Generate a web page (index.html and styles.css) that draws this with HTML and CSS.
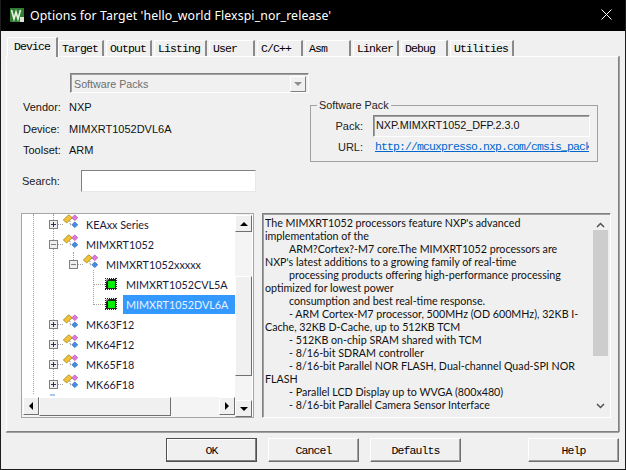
FILE: index.html
```html
<!DOCTYPE html>
<html lang="en">
<head>
<meta charset="utf-8">
<title>Options for Target</title>
<link rel="stylesheet" href="styles.css">
</head>
<body>
<svg class="defs" width="0" height="0" aria-hidden="true">
  <symbol id="gem" viewBox="0 0 16 15">
    <path d="M.3 6 6 .300 10 3.500 4 9z" fill="#f2c230" stroke="#8a7420" stroke-width=".7"/>
    <path d="M9.500 3.500 12.500.500 15.700 3.500 12.500 6.500z" fill="#e878e0" stroke="#a040a0" stroke-width=".7"/>
    <path d="M9.500 11 12.500 8 15.700 11 12.500 14z" fill="#3f8fe8" stroke="#2a5a9a" stroke-width=".7"/>
    <path d="M7.500 7v4h2" fill="none" stroke="#808080" stroke-width="1" stroke-dasharray="1 1"/>
  </symbol>
  <symbol id="chip" viewBox="0 0 12 12">
    <rect width="12" height="12" fill="#fff"/>
    <path d="M0 .500h12M0 11.500h12M.500 0v12M11.500 0v12" stroke="#222" stroke-width="1" stroke-dasharray="1 1"/>
    <rect x="1" y="1" width="10" height="10" fill="#222"/>
    <path d="M1 1h3L1 4z" fill="#999"/>
    <rect x="3" y="3" width="7" height="7" fill="#00f000"/>
  </symbol>
</svg>
<div class="window">
  <header class="titlebar">
    <svg class="app-icon" viewBox="0 0 14 14" width="14" height="14">
      <rect width="14" height="14" fill="#2f7d32"/>
      <path d="M1.500 2l2.500 9 2-7 2 7 2.500-9" fill="none" stroke="#e8f4e0" stroke-width="1.600"/>
      <rect x="10" y="9" width="4" height="5" fill="#d8e8d0"/>
    </svg>
    <span class="title">Options for Target 'hello_world Flexspi_nor_release'</span>
    <svg class="close" viewBox="0 0 11 11" width="11" height="11"><path d="M.5.500l10 10M10.500.500l-10 10" stroke="#fff" stroke-width="1" fill="none"/></svg>
  </header>
  <main class="client">
    <nav class="tabs">
      <span class="tab active w-device">Device</span>
      <span class="tab w-target">Target</span>
      <span class="tab w-output">Output</span>
      <span class="tab w-listing">Listing</span>
      <span class="tab w-user">User</span>
      <span class="tab w-cpp">C/C++</span>
      <span class="tab w-asm">Asm</span>
      <span class="tab w-linker">Linker</span>
      <span class="tab w-debug">Debug</span>
      <span class="tab w-util">Utilities</span>
    </nav>
    <section class="panel">
      <div class="combo">
        <span class="combo-text">Software Packs</span>
        <span class="combo-btn"><i class="tri-down"></i></span>
      </div>
      <div class="info">
        <dl class="facts">
          <dt>Vendor:</dt><dd>NXP</dd>
          <dt>Device:</dt><dd>MIMXRT1052DVL6A</dd>
          <dt>Toolset:</dt><dd>ARM</dd>
        </dl>
        <fieldset class="pack">
          <legend>Software Pack</legend>
          <div class="pack-row">
            <label>Pack:</label>
            <div class="pack-field">NXP.MIMXRT1052_DFP.2.3.0</div>
          </div>
          <div class="pack-row url-row">
            <label>URL:</label>
            <a class="link">http://mcuxpresso.nxp.com/cmsis_pack</a>
          </div>
        </fieldset>
      </div>
      <div class="search">
        <label>Search:</label>
        <div class="search-box"></div>
      </div>
      <div class="lower">
        <div class="tree">
          <div class="tree-view">
            <i class="guide g0"></i><i class="guide g1"></i><i class="guide g2"></i><i class="guide g3"></i>
            <div class="node l1"><i class="exp plus"></i><i class="dash"></i><svg class="gem"><use href="#gem"/></svg><span>KEAxx Series</span></div>
            <div class="node l1"><i class="exp"></i><i class="dash"></i><svg class="gem"><use href="#gem"/></svg><span>MIMXRT1052</span></div>
            <div class="node l2"><i class="exp"></i><i class="dash"></i><svg class="gem"><use href="#gem"/></svg><span>MIMXRT1052xxxxx</span></div>
            <div class="node l3"><i class="dash long"></i><svg class="chip"><use href="#chip"/></svg><span>MIMXRT1052CVL5A</span></div>
            <div class="node l3"><i class="dash long"></i><svg class="chip"><use href="#chip"/></svg><span class="sel">MIMXRT1052DVL6A</span></div>
            <div class="node l1"><i class="exp plus"></i><i class="dash"></i><svg class="gem"><use href="#gem"/></svg><span>MK63F12</span></div>
            <div class="node l1"><i class="exp plus"></i><i class="dash"></i><svg class="gem"><use href="#gem"/></svg><span>MK64F12</span></div>
            <div class="node l1"><i class="exp plus"></i><i class="dash"></i><svg class="gem"><use href="#gem"/></svg><span>MK65F18</span></div>
            <div class="node l1"><i class="exp plus"></i><i class="dash"></i><svg class="gem"><use href="#gem"/></svg><span>MK66F18</span></div>
            <div class="stub"></div>
          </div>
          <div class="hbar">
            <span class="sb-btn"><i class="tri-left"></i></span>
            <span class="sb-thumb h-thumb"></span>
            <span class="sb-track"></span>
            <span class="sb-btn"><i class="tri-right"></i></span>
          </div>
          <div class="vbar">
            <span class="sb-btn"><i class="tri-up"></i></span>
            <span class="sb-track sb-a"></span>
            <span class="sb-thumb v-thumb"></span>
            <span class="sb-track"></span>
            <span class="sb-btn"><i class="tri-down dark"></i></span>
          </div>
        </div>
        <div class="desc">
          <div class="desc-text">
            <div>The MIMXRT1052 processors feature NXP's advanced</div>
            <div>implementation of the</div>
            <div class="ind">ARM?Cortex?-M7 core.The MIMXRT1052 processors are</div>
            <div>NXP's latest additions to a growing family of real-time</div>
            <div class="ind">processing products offering high-performance processing</div>
            <div>optimized for lowest power</div>
            <div class="ind">consumption and best real-time response.</div>
            <div class="ind">- ARM Cortex-M7 processor, 500MHz (OD 600MHz), 32KB I-</div>
            <div>Cache, 32KB D-Cache, up to 512KB TCM</div>
            <div class="ind">- 512KB on-chip SRAM shared with TCM</div>
            <div class="ind">- 8/16-bit SDRAM controller</div>
            <div class="ind">- 8/16-bit Parallel NOR FLASH, Dual-channel Quad-SPI NOR</div>
            <div>FLASH</div>
            <div class="ind">- Parallel LCD Display up to WVGA (800x480)</div>
            <div class="ind">- 8/16-bit Parallel Camera Sensor Interface</div>
          </div>
          <div class="desc-bar">
            <svg class="chev" viewBox="0 0 9 6" width="9" height="6"><path d="M1 5l3.500-3.500L8 5" fill="none" stroke="#505050" stroke-width="1.500"/></svg>
            <span class="desc-thumb"></span>
            <svg class="chev" viewBox="0 0 9 6" width="9" height="6"><path d="M1 1l3.500 3.500L8 1" fill="none" stroke="#505050" stroke-width="1.500"/></svg>
          </div>
        </div>
      </div>
    </section>
    <footer class="buttons">
      <button class="btn default">OK</button>
      <button class="btn">Cancel</button>
      <button class="btn">Defaults</button>
      <button class="btn help">Help</button>
    </footer>
  </main>
</div>
</body>
</html>
```
FILE: styles.css
```css
* { box-sizing: border-box; }
html, body { margin: 0; padding: 0; }
body { width: 626px; height: 470px; overflow: hidden; font: 11px "Liberation Sans", sans-serif; color: #000; background: #f0f0f0; }
.defs { display: block; height: 0; }
.window { width: 626px; height: 470px; display: flex; flex-direction: column; border: 1px solid #1c1c1c; border-top: 0; }
.titlebar { flex: 0 0 31px; background: #000; color: #fff; display: flex; align-items: center; padding: 0 13px 0 9px; }
.app-icon { flex: none; margin-top: -1px; }
.title { flex: 1; margin-left: 6px; font: 12.300px "Noto Sans", sans-serif; letter-spacing: .1px; white-space: nowrap; margin-top: -1px; }
.close { flex: none; margin-top: -3px; }
.client { flex: 1; display: flex; flex-direction: column; background: #f0f0f0; padding: 6px 6px 0 5px; }

.tabs { display: flex; height: 19px; padding-left: 2px; align-items: flex-end; position: relative; z-index: 1; }
.tab { height: 16px; margin-right: 2px; font: 11.500px/15px "Liberation Mono", monospace; letter-spacing: -.9px; padding-left: 3px; background: #f0f0f0; border-left: 1px solid #fff; border-top: 1px solid #fff; border-right: 2px solid #8a8a8a; }
.tab.active { height: 20px; margin-bottom: -1px; line-height: 17px; padding-left: 6px; border-top-left-radius: 2px; margin-left: -1px; margin-right: 0; }
.w-device { width: 51px; }
.w-target { width: 46px; }
.w-output { width: 46px; }
.w-listing { width: 53px; }
.w-user { width: 46px; }
.w-cpp { width: 46px; }
.w-asm { width: 46px; }
.w-linker { width: 46px; }
.w-debug { width: 47px; }
.w-util { width: 64px; }

.panel { width: 613px; height: 376px; border: 1px solid; border-color: #fff #808080 #808080 #fff; box-shadow: 0 1px 0 #a0a0a0, 1px 0 0 #a0a0a0; padding: 16px 0 0 14px; display: flex; flex-direction: column; }

.combo { margin-left: 49px; width: 239px; height: 20px; border: 1px solid; border-color: #808080 #fff #fff #808080; box-shadow: inset 1px 1px 0 #a0a0a0; display: flex; align-items: center; padding: 2px 2px 1px 3px; }
.combo-text { flex: 1; color: #6d6d6d; font-size: 10.700px; }
.combo-btn { flex: none; width: 16px; height: 16px; background: #f0f0f0; border: 1px solid; border-color: #fff #808080 #808080 #fff; display: flex; align-items: center; justify-content: center; }
.tri-down { display: block; width: 0; height: 0; border: 4px solid transparent; border-top: 4px solid #909090; border-bottom: 0; }
.tri-down.dark { border-top-color: #000; }
.tri-up { display: block; width: 0; height: 0; border: 4px solid transparent; border-bottom: 4px solid #000; border-top: 0; }
.tri-left { display: block; width: 0; height: 0; border: 4px solid transparent; border-right: 4px solid #000; border-left: 0; }
.tri-right { display: block; width: 0; height: 0; border: 4px solid transparent; border-left: 4px solid #000; border-right: 0; }

.info { display: flex; height: 64px; margin-top: 10px; }
.facts { margin: -3px 0 0 2px; width: 287px; display: grid; grid-template-columns: 46px 1fr; grid-auto-rows: 21.500px; color: #111; }
.facts dt, .facts dd { margin: 0; font-size: 11px; line-height: 14px; }

.pack { margin: -4px 0 0 0; width: 288px; height: 63px; padding: 0; border: 1px solid #a0a0a0; min-width: 0; }
.pack legend { margin-left: 6px; padding: 0 2px; font-size: 10.800px; line-height: 13px; color: #222; }
.pack-row { display: flex; align-items: center; margin-top: 3px; }
.pack-row label { width: 52px; text-align: right; font-size: 11px; color: #222; flex: none; }
.pack-field { margin-left: 10px; width: 217px; height: 22px; border: 1px solid; border-color: #808080 #fff #fff #808080; box-shadow: inset 1px 1px 0 #a0a0a0; padding: 2px 2px 0 2px; font-size: 10.800px; line-height: 15px; color: #111; }
.url-row { margin-top: 0; height: 20px; }
.link { margin-left: 12px; width: 214px; overflow: hidden; white-space: nowrap; font: 11.500px/14px "Liberation Mono", monospace; letter-spacing: -.9px; color: #0066cc; text-decoration: underline; }

.search { display: flex; align-items: center; margin: 3px 0 0 1px; height: 22px; }
.search label { width: 59px; font-size: 11px; color: #222; }
.search-box { width: 175px; height: 22px; background: #fff; border: 1px solid; border-color: #808080 #e8e8e8 #e8e8e8 #808080; }

.lower { display: flex; margin-top: 21px; }
.tree { width: 233px; height: 205px; border: 1px solid #a6a6a6; background: #fff; display: grid; grid-template-columns: 1fr 17px; grid-template-rows: 183px 20px; padding: 0 1px 1px 0; }
.tree-view { position: relative; overflow: hidden; grid-column: 1; grid-row: 1; }
.guide { position: absolute; width: 0; border-left: 1px dotted #a0a0a0; }
.g0 { left: 11px; top: 0; height: 180px; }
.g1 { left: 31px; top: 0; height: 170px; }
.g2 { left: 51px; top: 38px; height: 8px; }
.g3 { left: 71px; top: 56px; height: 35px; }
.node { display: flex; align-items: center; height: 20px; font: 10.800px "Lato", sans-serif; color: #1a1a3a; position: relative; }
.l1 { padding-left: 27px; }
.l2 { padding-left: 47px; }
.l3 { padding-left: 71px; }
.exp { flex: none; width: 9px; height: 9px; margin-top: 1px; border: 1px solid #808080; background: linear-gradient(#808080,#808080) center/5px 1px no-repeat #eee; position: relative; z-index: 1; }
.exp.plus { background: linear-gradient(#303060,#303060) center/5px 1px no-repeat, linear-gradient(#303060,#303060) center/1px 5px no-repeat, #eee; }
.dash { flex: none; width: 5px; height: 0; border-top: 1px dotted #a0a0a0; }
.dash.long { width: 12px; margin-top: 1px; }
.gem { flex: none; width: 15px; height: 15px; margin: -5px 8px 0 0; }
.chip { flex: none; width: 12px; height: 12px; margin: -1px 9px 0 0; }
.node .sel { background: #3399ff; color: #e8f2ff; height: 19px; line-height: 19px; width: 112px; margin-left: -3px; padding-left: 3px; }
.stub { width: 5px; height: 2px; margin: 0 0 0 28px; background: #a8c8f0; }

.vbar { grid-column: 2; grid-row: 1 / 3; display: flex; flex-direction: column; background: #f4f4f4; padding-top: 1px; }
.hbar { grid-column: 1; grid-row: 2; display: flex; align-items: stretch; padding: 0 0 1px 1px; background: #f4f4f4; }
.sb-btn { flex: none; width: 16px; height: 18px; background: #f0f0f0; border: 1px solid; border-color: #fff #707070 #707070 #fff; display: flex; align-items: center; justify-content: center; }
.vbar .sb-btn { width: 17px; height: 17px; }
.sb-track { flex: 1; }
.sb-a { flex: 0 0 44px; }
.v-thumb { flex: 0 0 100px; }
.sb-thumb { background: #f0f0f0; border: 1px solid; border-color: #fff #707070 #707070 #fff; }
.h-thumb { flex: 0 0 132px; }

.desc { margin-left: 8px; width: 349px; height: 205px; border: 1px solid; border-color: #808080 #fff #fff #808080; box-shadow: inset 1px 1px 0 #a0a0a0; display: flex; padding: 2px; }
.desc-text { flex: 1; min-width: 0; overflow: hidden; font: 10.700px/13px "Lato", sans-serif; color: #111; white-space: nowrap; }
.ind { padding-left: 24px; }
.desc-bar { flex: none; width: 15px; display: flex; flex-direction: column; align-items: center; padding-top: 6px; }
.desc-thumb { width: 15px; height: 126px; background: #cdcdcd; margin: 2px 0 47px; }
.chev { flex: none; }

.buttons { flex: 1; display: flex; align-items: flex-start; padding: 6px 0 0 160px; }
.btn { width: 91px; height: 24px; margin-right: 11px; padding: 0; background: #f0f0f0; border: 1px solid; border-color: #fff #707070 #707070 #fff; box-shadow: inset -1px -1px 0 #a0a0a0; font: 11.500px "Liberation Mono", monospace; letter-spacing: -.9px; color: #000; }
.btn.default { border: 1px solid #505050; box-shadow: inset -1px -1px 0 #808080, inset 1px 1px 0 #fff; }
.btn.help { margin-left: 56px; margin-right: 0; }
```
